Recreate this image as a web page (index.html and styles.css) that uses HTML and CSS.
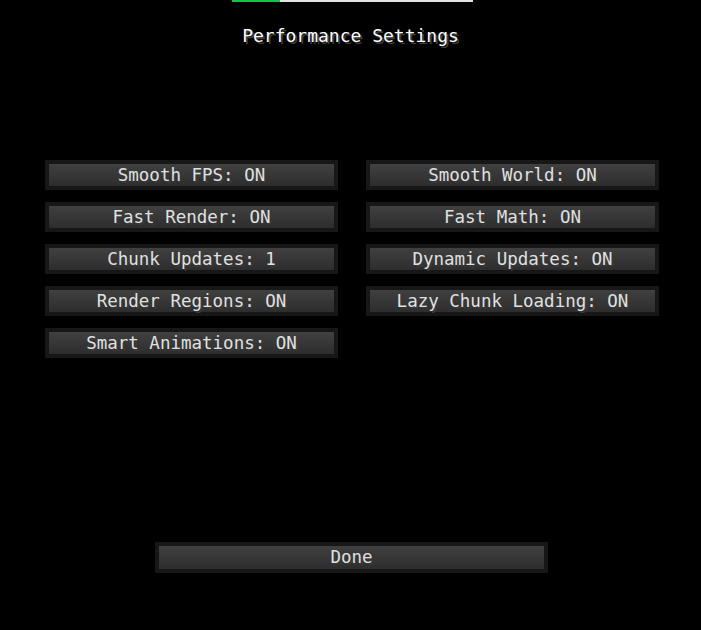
FILE: index.html
```html
<!DOCTYPE html>
<html>
<head>
<meta charset="utf-8">
<link rel="stylesheet" href="styles.css">
</head>
<body>
  <div class="progress"><div class="progress-fill"></div></div>
  <h1 class="title">Performance Settings</h1>
  <div class="grid">
    <div class="btn">Smooth FPS: ON</div>
    <div class="btn">Smooth World: ON</div>
    <div class="btn">Fast Render: ON</div>
    <div class="btn">Fast Math: ON</div>
    <div class="btn">Chunk Updates: 1</div>
    <div class="btn">Dynamic Updates: ON</div>
    <div class="btn">Render Regions: ON</div>
    <div class="btn">Lazy Chunk Loading: ON</div>
    <div class="btn">Smart Animations: ON</div>
  </div>
  <div class="btn done">Done</div>
</body>
</html>
```

FILE: styles.css
```css
html, body {
  margin: 0;
  padding: 0;
  background: #000;
}
body {
  width: 701px;
  height: 630px;
  overflow: hidden;
  font-family: "DejaVu Sans Mono", "Liberation Mono", monospace;
}
.progress {
  margin-left: 232px;
  width: 241px;
  height: 2px;
  background: #e2e2e2;
  display: flex;
}
.progress-fill {
  width: 48px;
  background: #12c24a;
}
.title {
  margin: 24px 0 0 0;
  height: 20px;
  line-height: 20px;
  font-size: 18px;
  font-weight: normal;
  text-align: center;
  color: #ffffff;
  text-shadow: 2px 2px 0 #3e3e3e;
}
.grid {
  margin: 114px 0 0 45px;
  display: grid;
  grid-template-columns: 293px 293px;
  grid-auto-rows: 30px;
  gap: 12px 28px;
}
.btn {
  box-sizing: border-box;
  height: 30px;
  border: 4px solid #171717;
  background: linear-gradient(#404040, #2d2d2d);
  color: #e0e0e0;
  font-size: 17.5px;
  line-height: 22px;
  text-align: center;
  text-shadow: 2px 2px 0 #383838;
  white-space: nowrap;
}
.done {
  margin: 184px 0 0 155px;
  width: 393px;
  height: 31px;
  line-height: 23px;
}
```
